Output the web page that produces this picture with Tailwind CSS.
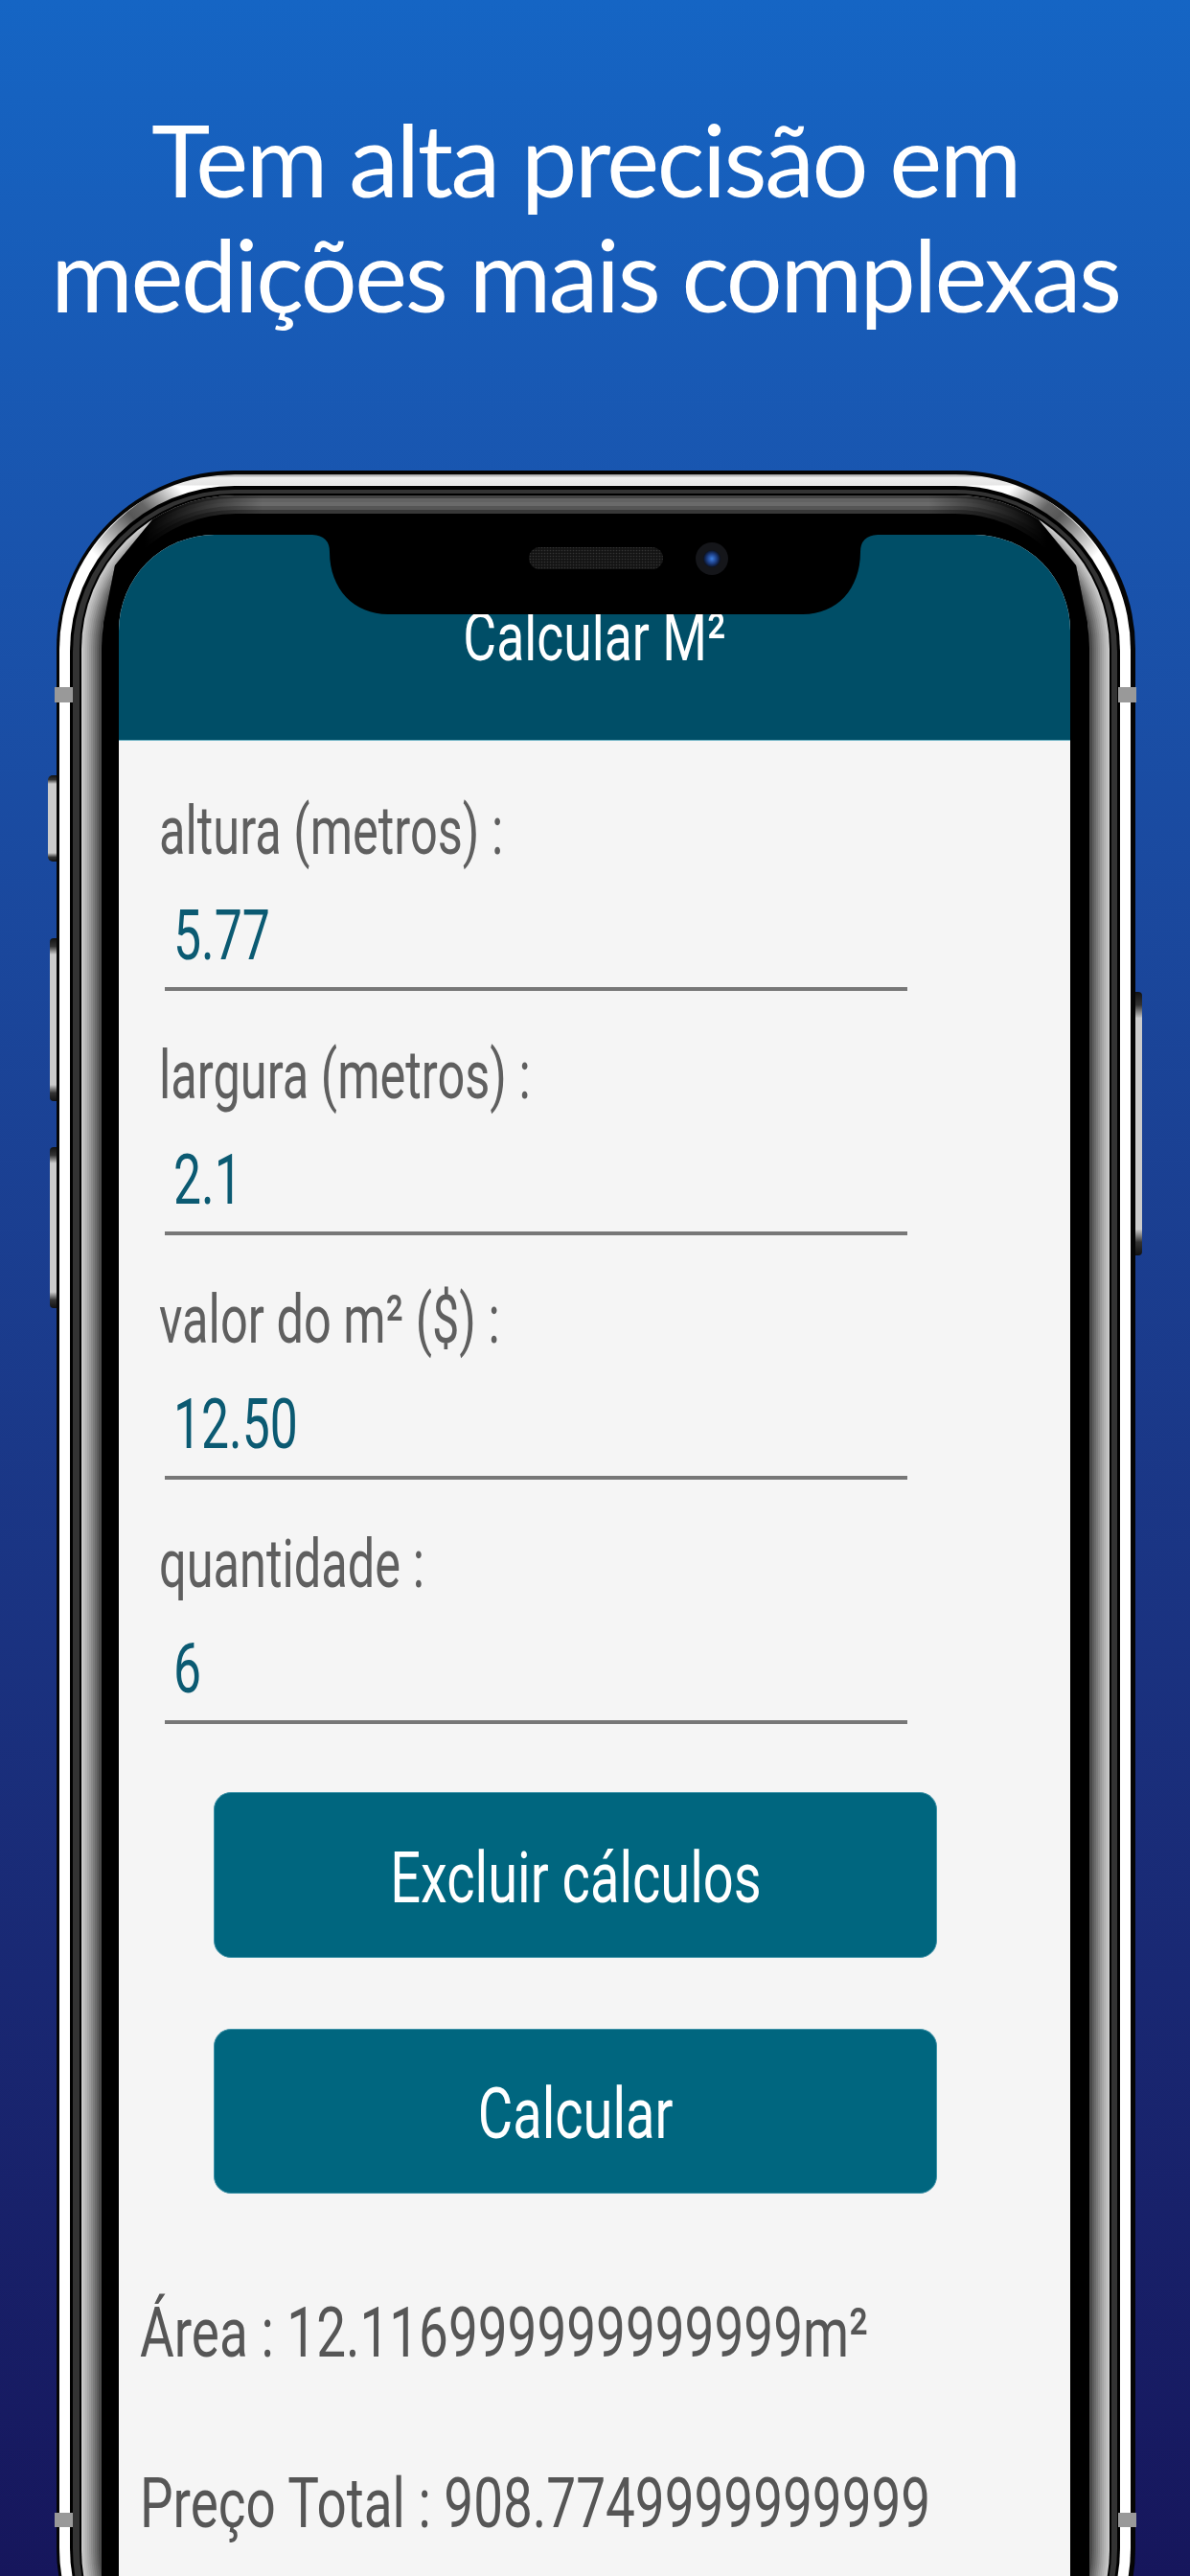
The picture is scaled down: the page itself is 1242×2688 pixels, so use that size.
<!DOCTYPE html>
<html lang="pt">
<head>
<meta charset="utf-8">
<script src="https://cdn.jsdelivr.net/npm/@tailwindcss/browser@4"></script>
</head>
<body>
<main class="relative w-[1242px] h-[2688px] overflow-hidden bg-linear-to-b from-[#1565c4] to-[#16165c] font-[Roboto,sans-serif]">

  <!-- Phone body (decorative frame drawn behind the screen) -->
  <svg class="absolute top-0 left-0" width="1242" height="2688" viewBox="0 0 1242 2688" aria-hidden="true">
    <defs>
      <linearGradient id="wb" gradientUnits="userSpaceOnUse" x1="0" y1="495" x2="0" y2="520">
        <stop offset="0" stop-color="#999"/><stop offset=".14" stop-color="#eee"/><stop offset=".42" stop-color="#e6e6e6"/><stop offset=".5" stop-color="#fff"/>
      </linearGradient>
      <linearGradient id="gl" gradientUnits="userSpaceOnUse" x1="98" y1="578" x2="178" y2="500">
        <stop offset="0" stop-color="#444" stop-opacity="0"/><stop offset=".5" stop-color="#444" stop-opacity=".9"/><stop offset=".65" stop-color="#555" stop-opacity=".9"/><stop offset="1" stop-color="#555" stop-opacity="0"/>
      </linearGradient>
      <linearGradient id="gr" gradientUnits="userSpaceOnUse" x1="1145" y1="578" x2="1065" y2="500">
        <stop offset="0" stop-color="#444" stop-opacity="0"/><stop offset=".5" stop-color="#444" stop-opacity=".9"/><stop offset=".65" stop-color="#555" stop-opacity=".9"/><stop offset="1" stop-color="#555" stop-opacity="0"/>
      </linearGradient>
      <linearGradient id="fade" gradientUnits="userSpaceOnUse" x1="110" y1="0" x2="1133" y2="0">
        <stop offset="0" stop-color="#000"/><stop offset=".04" stop-color="#000"/><stop offset=".16" stop-color="#000" stop-opacity="0"/><stop offset=".84" stop-color="#000" stop-opacity="0"/><stop offset=".96" stop-color="#000"/><stop offset="1" stop-color="#000"/>
      </linearGradient>
      <clipPath id="topband"><polygon points="165,535 120,590 108,650 108,700 1135,700 1135,650 1123,590 1078,535 1078,500 165,500"/></clipPath>
      <linearGradient id="btn" x1="0" y1="0" x2="0" y2="1">
        <stop offset="0" stop-color="#111"/><stop offset=".05" stop-color="#333"/><stop offset=".1" stop-color="#ccc"/><stop offset=".9" stop-color="#ccc"/><stop offset=".95" stop-color="#333"/><stop offset="1" stop-color="#111"/>
      </linearGradient>
    </defs>

    <!-- side buttons -->
    <rect x="50" y="809" width="14" height="90" rx="5" fill="url(#btn)"/>
    <rect x="52" y="979" width="12" height="170" rx="4" fill="url(#btn)"/>
    <rect x="52" y="1197" width="12" height="168" rx="4" fill="url(#btn)"/>
    <rect x="1178" y="1035" width="14" height="275" rx="4" fill="url(#btn)"/>

    <!-- outer black, white rim -->
    <rect x="59" y="491" width="1126" height="2354" rx="186" fill="#050505"/>
    <rect x="62" y="495" width="1118" height="2347" rx="183" fill="url(#wb)"/>
    <path d="M80 621 A176 176 0 0 1 230 501" fill="none" stroke="url(#gl)" stroke-width="13"/>
    <path d="M1162 621 A176 176 0 0 0 1012 501" fill="none" stroke="url(#gr)" stroke-width="13"/>

    <!-- dark groove -->
    <rect x="73" y="507" width="1096" height="2324" rx="172" fill="#000"/>
    <rect x="76" y="511" width="1090" height="2318" rx="169" fill="#333"/>
    <rect x="83" y="515" width="1077" height="2308" rx="162" fill="#000"/>

    <!-- silver bezel: side shading -->
    <rect x="85" y="517" width="1073" height="2304" rx="160" fill="#c8c8c8"/>
    <rect x="87" y="519" width="1069" height="2300" rx="158" fill="#bdbdbd"/>
    <rect x="89" y="521" width="1065" height="2296" rx="156" fill="#b2b2b2"/>
    <rect x="91" y="523" width="1061" height="2292" rx="154" fill="#a6a6a6"/>
    <rect x="93" y="525" width="1057" height="2288" rx="152" fill="#999"/>
    <rect x="95" y="527" width="1053" height="2284" rx="150" fill="#8a8a8a"/>
    <rect x="97" y="529" width="1049" height="2280" rx="148" fill="#7b7b7b"/>
    <rect x="99" y="531" width="1045" height="2276" rx="146" fill="#6c6c6c"/>
    <rect x="101" y="533" width="1041" height="2272" rx="144" fill="#5d5d5d"/>
    <rect x="103" y="535" width="1037" height="2268" rx="142" fill="#4a4a4a"/>

    <!-- silver bezel: top shading -->
    <g clip-path="url(#topband)">
      <rect x="85" y="517" width="1073" height="400" rx="160" fill="#444"/>
      <rect x="88" y="520" width="1067" height="400" rx="157" fill="#626262"/>
      <rect x="91" y="524" width="1061" height="400" rx="154" fill="#6a6a6a"/>
      <rect x="95" y="528" width="1053" height="400" rx="150" fill="#555"/>
      <rect x="100" y="532" width="1043" height="400" rx="145" fill="#383838"/>
      <rect x="85" y="517" width="1073" height="400" rx="160" fill="url(#fade)"/>
    </g>

    <!-- inner black -->
    <rect x="106" y="536" width="1031" height="2300" rx="140" fill="#000"/>

    <!-- antenna bands -->
    <rect x="57" y="717" width="19" height="16" fill="#999"/>
    <rect x="1167" y="717" width="19" height="16" fill="#999"/>
    <rect x="57" y="2622" width="19" height="15" fill="#999"/>
    <rect x="1167" y="2622" width="19" height="15" fill="#999"/>
  </svg>

  <!-- Headline -->
  <h1 class="relative h-[558px] pt-[106px] pr-[20px] text-center text-white font-[Lato,sans-serif] font-normal text-[104px] leading-[120px] tracking-[-2.4px] whitespace-nowrap">
    Tem alta precisão em<br>medições mais complexas
  </h1>

  <!-- Screen -->
  <section class="relative z-10 ml-[124px] w-[993px] h-[2130px] rounded-t-[100px] overflow-hidden bg-[#f5f5f5]">
    <header class="h-[215px] bg-[#004e67] border-b border-[#6fb3c4] flex justify-center pt-[67px]">
      <span class="text-white text-[70px] leading-[80px] whitespace-nowrap scale-x-[0.764] h-[80px]">Calcular M²</span>
    </header>

    <div class="pt-[54px] pl-[42px]">
      <div class="h-[255px]">
        <p class="text-[70px] leading-[80px] text-[#5f5f5f] whitespace-nowrap origin-left scale-x-[0.722]">altura (metros) :</p>
        <p class="mt-[30px] ml-[15px] text-[72px] leading-[80px] text-[#0b5a72] whitespace-nowrap origin-left scale-x-[0.718]">5.77</p>
        <div class="mt-[13px] ml-[6px] w-[775px] h-[4px] bg-[#777]"></div>
      </div>
      <div class="h-[255px]">
        <p class="text-[70px] leading-[80px] text-[#5f5f5f] whitespace-nowrap origin-left scale-x-[0.722]">largura (metros) :</p>
        <p class="mt-[30px] ml-[15px] text-[72px] leading-[80px] text-[#0b5a72] whitespace-nowrap origin-left scale-x-[0.718]">2.1</p>
        <div class="mt-[13px] ml-[6px] w-[775px] h-[4px] bg-[#777]"></div>
      </div>
      <div class="h-[255px]">
        <p class="text-[70px] leading-[80px] text-[#5f5f5f] whitespace-nowrap origin-left scale-x-[0.722]">valor do m² ($) :</p>
        <p class="mt-[30px] ml-[15px] text-[72px] leading-[80px] text-[#0b5a72] whitespace-nowrap origin-left scale-x-[0.718]">12.50</p>
        <div class="mt-[13px] ml-[6px] w-[775px] h-[4px] bg-[#777]"></div>
      </div>
      <div class="h-[207px]">
        <p class="text-[70px] leading-[80px] text-[#5f5f5f] whitespace-nowrap origin-left scale-x-[0.722]">quantidade :</p>
        <p class="mt-[30px] ml-[15px] text-[72px] leading-[80px] text-[#0b5a72] whitespace-nowrap origin-left scale-x-[0.718]">6</p>
        <div class="mt-[13px] ml-[6px] w-[775px] h-[4px] bg-[#777]"></div>
      </div>
    </div>

    <div class="mt-[71px] ml-[99px] w-[755px] flex flex-col gap-[74px]">
      <button class="h-[173px] pt-[6px] rounded-[18px] border border-[#3f93a8] bg-[#00667f] text-white text-[74px] leading-[80px]"><span class="inline-block whitespace-nowrap scale-x-[0.757]">Excluir cálculos</span></button>
      <button class="h-[172px] pt-[6px] rounded-[18px] border border-[#3f93a8] bg-[#00667f] text-white text-[74px] leading-[80px]"><span class="inline-block whitespace-nowrap scale-x-[0.757]">Calcular</span></button>
    </div>

    <div class="mt-[106px] ml-[22px] text-[#565656]">
      <p class="text-[72px] leading-[80px] whitespace-nowrap origin-left scale-x-[0.762]">Área : 12.116999999999999m²</p>
      <p class="mt-[98px] text-[72px] leading-[80px] whitespace-nowrap origin-left scale-x-[0.762]">Preço Total : 908.7749999999999</p>
    </div>

    <!-- Notch overlay -->
    <svg class="absolute top-0 left-0" width="993" height="100" viewBox="124 558 993 100" aria-hidden="true">
      <defs>
        <pattern id="mesh" width="3" height="3" patternUnits="userSpaceOnUse">
          <rect width="3" height="3" fill="#141414"/><circle cx="1.5" cy="1.5" r="0.8" fill="#333"/>
        </pattern>
        <radialGradient id="lens">
          <stop offset="0" stop-color="#3f7fe0"/><stop offset=".55" stop-color="#1d3f86"/><stop offset="1" stop-color="#0a1020"/>
        </radialGradient>
      </defs>
      <path d="M326 556 L326 558 Q344 559 344 576 C344 615 370 641 405 641 L838 641 C873 641 898 615 898 576 Q898 559 916 558 L916 556 Z" fill="#000"/>
      <rect x="552" y="571" width="140" height="23" rx="11.5" fill="url(#mesh)"/>
      <circle cx="743" cy="583" r="17" fill="#15161a"/>
      <circle cx="743" cy="583" r="9" fill="url(#lens)"/>
    </svg>
  </section>
</main>
</body>
</html>
